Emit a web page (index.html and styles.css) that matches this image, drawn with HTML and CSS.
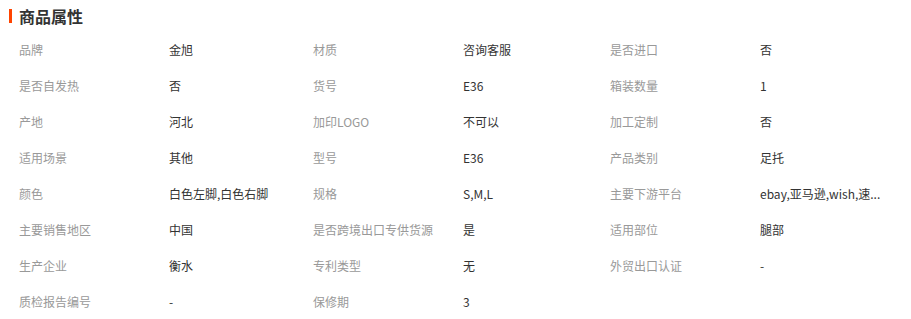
FILE: index.html
```html
<!DOCTYPE html>
<html lang="zh-CN">
<head>
<meta charset="utf-8">
<title>商品属性</title>
<link rel="stylesheet" href="styles.css">
</head>
<body>
<div class="attrs">
  <div class="title"><span class="bar"></span><h3>商品属性</h3></div>
  <div class="grid">
    <div class="k">品牌</div><div class="v">金旭</div>
    <div class="k">材质</div><div class="v">咨询客服</div>
    <div class="k">是否进口</div><div class="v">否</div>

    <div class="k">是否自发热</div><div class="v">否</div>
    <div class="k">货号</div><div class="v">E36</div>
    <div class="k">箱装数量</div><div class="v">1</div>

    <div class="k">产地</div><div class="v">河北</div>
    <div class="k">加印LOGO</div><div class="v">不可以</div>
    <div class="k">加工定制</div><div class="v">否</div>

    <div class="k">适用场景</div><div class="v">其他</div>
    <div class="k">型号</div><div class="v">E36</div>
    <div class="k">产品类别</div><div class="v">足托</div>

    <div class="k">颜色</div><div class="v">白色左脚,白色右脚</div>
    <div class="k">规格</div><div class="v">S,M,L</div>
    <div class="k">主要下游平台</div><div class="v">ebay,亚马逊,wish,速...</div>

    <div class="k">主要销售地区</div><div class="v">中国</div>
    <div class="k">是否跨境出口专供货源</div><div class="v">是</div>
    <div class="k">适用部位</div><div class="v">腿部</div>

    <div class="k">生产企业</div><div class="v">衡水</div>
    <div class="k">专利类型</div><div class="v">无</div>
    <div class="k">外贸出口认证</div><div class="v">-</div>

    <div class="k">质检报告编号</div><div class="v">-</div>
    <div class="k">保修期</div><div class="v">3</div>
    <div class="k"></div><div class="v"></div>
  </div>
</div>
</body>
</html>
```

FILE: styles.css
```css
html, body {
  margin: 0;
  padding: 0;
  background: #fff;
}
body {
  font-family: "Noto Sans CJK SC", "Noto Sans", sans-serif;
  font-size: 12px;
  color: #333;
}
.attrs {
  padding: 0 0 0 9px;
}
.title {
  display: flex;
  align-items: center;
  height: 32px;
  gap: 7px;
}
.bar {
  width: 3px;
  height: 14px;
  background: #ff4400;
}
.title h3 {
  margin: 0;
  font-size: 16px;
  font-weight: bold;
  color: #333;
  line-height: 20px;
}
.grid {
  display: grid;
  grid-template-columns: 150px 144px 150px 147px 150px 140px;
  grid-auto-rows: 36px;
  padding-left: 10px;
}
.k, .v {
  white-space: nowrap;
  line-height: 36px;
}
.k {
  color: #999;
}
.v {
  color: #333;
}
```
